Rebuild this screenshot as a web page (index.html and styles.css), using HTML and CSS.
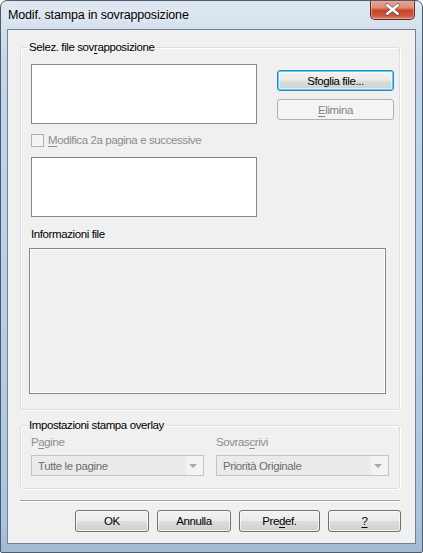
FILE: index.html
```html
<!DOCTYPE html>
<html>
<head>
<meta charset="utf-8">
<link rel="stylesheet" href="styles.css">
</head>
<body>
<div class="window">
  <div class="titlebar">
    <span class="title">Modif. stampa in sovrapposizione</span>
    <div class="close">
      <svg width="45" height="19" viewBox="0 0 45 19">
        <path d="M17 5 L28 14 M28 5 L17 14" stroke="#3b3b3b" stroke-width="4.2" stroke-linecap="round" fill="none" opacity="0.55"/>
        <path d="M17 5 L28 14 M28 5 L17 14" stroke="#ffffff" stroke-width="2.6" stroke-linecap="round" fill="none"/>
      </svg>
    </div>
  </div>
  <div class="client">
    <div class="group g1">
      <span class="legend">Selez. file sov<u>r</u>apposizione</span>
      <div class="row1">
        <div class="listbox"></div>
        <div class="btncol">
          <div class="btn default">Sfoglia file...</div>
          <div class="btn disabled"><u>E</u>limina</div>
        </div>
      </div>
      <div class="check"><span class="box"></span><span class="dis"><u>M</u>odifica 2a pagina e successive</span></div>
      <div class="listbox second"></div>
      <div class="label">Informazioni file</div>
      <div class="infobox"></div>
    </div>
    <div class="group g2">
      <span class="legend">Impostazioni stampa overlay</span>
      <div class="combos">
        <div class="field">
          <div class="dis flabel">P<u>a</u>gine</div>
          <div class="combo"><span class="ctext">Tutte le pagine</span><span class="carrow"></span></div>
        </div>
        <div class="field">
          <div class="dis flabel">Sovras<u>c</u>rivi</div>
          <div class="combo"><span class="ctext">Priorità Originale</span><span class="carrow"></span></div>
        </div>
      </div>
    </div>
    <div class="sep"></div>
    <div class="buttons">
      <div class="btn b-ok">OK</div>
      <div class="btn b-cancel">Annulla</div>
      <div class="btn b-def">Pre<u>d</u>ef.</div>
      <div class="btn b-help"><u>?</u></div>
    </div>
  </div>
</div>
</body>
</html>
```
FILE: styles.css
```css
* { box-sizing: border-box; }
html, body { margin: 0; padding: 0; background: #ffffff; }
body {
  font-family: "Liberation Sans", Arial, sans-serif;
  font-size: 11.5px;
  letter-spacing: -0.4px;
  color: #000;
}
u { text-decoration: underline; text-underline-offset: 2px; text-decoration-thickness: 1px; }

.window {
  width: 423px;
  height: 553px;
  border: 1px solid #4c5b6d;
  border-radius: 7px 7px 2px 2px;
  background: linear-gradient(180deg, #dfe8f1 0px, #d8e3ee 20px, #c3d6ea 60px, #b8cfe6 300px, #abc4dd 520px, #a0bad0 553px);
  display: flex;
  flex-direction: column;
  overflow: hidden;
}

.titlebar {
  height: 28px;
  display: flex;
  align-items: flex-start;
  padding-left: 7px;
}
.title {
  font-size: 12.5px;
  letter-spacing: -0.15px;
  line-height: 14px;
  margin-top: 7px;
  color: #000;
  text-shadow: 0 0 8px rgba(255,255,255,0.9);
}
.close {
  margin-left: auto;
  margin-right: 7px;
  margin-top: -1px;
  width: 45px;
  height: 20px;
  border: 1px solid #5b2a24;
  border-top: none;
  border-radius: 0 0 5px 5px;
  background: linear-gradient(180deg, #e9a899 0%, #dd8c79 40%, #c8452c 55%, #c9543a 80%, #d9826a 100%);
  box-shadow: inset 0 0 0 1px rgba(255,210,200,0.45);
  display: flex;
}
.close svg { display: block; }

.client {
  margin: 0 6px;
  height: 515px;
  border: 1px solid #6f8196;
  background: #f0f0f0;
  padding-top: 17px;
  padding-left: 12px;
}

.group {
  position: relative;
  width: 380px;
  border: 1px solid #d5dfe5;
  border-radius: 3px;
  box-shadow: inset 1px 1px 0 #ffffff, 1px 1px 0 #ffffff;
}
.legend {
  position: absolute;
  top: -8px;
  left: 6px;
  padding: 0 2px;
  background: #f0f0f0;
  line-height: 15px;
  white-space: nowrap;
}

.g1 {
  height: 363px;
  padding: 16px 0 0 10px;
}
.row1 { display: flex; }
.listbox {
  width: 226px;
  height: 60px;
  border: 1px solid #828790;
  background: #ffffff;
}
.btncol {
  margin-left: 20px;
  padding-top: 6px;
  display: flex;
  flex-direction: column;
  gap: 8px;
}
.btn {
  height: 21px;
  border: 1px solid #707070;
  border-radius: 3px;
  background: linear-gradient(180deg, #f2f2f2 0%, #ebebeb 48%, #dddddd 52%, #cfcfcf 100%);
  box-shadow: inset 0 0 0 1px rgba(255,255,255,0.7);
  display: flex;
  align-items: center;
  justify-content: center;
  line-height: 14px;
  white-space: nowrap;
}
.btncol .btn { width: 117px; }
.btn.default {
  border-color: #3c7fb1;
  box-shadow: inset 0 0 0 1px #48d7ff, inset 0 0 0 2px rgba(255,255,255,0.5);
  background: linear-gradient(180deg, #f2f2f2 0%, #ebebeb 48%, #dddddd 52%, #cfcfcf 100%);
}
.btn.disabled {
  border-color: #adb2b5;
  background: #f4f4f4;
  box-shadow: none;
  color: #838383;
}

.check {
  margin-top: 10px;
  height: 13px;
  display: flex;
  align-items: center;
}
.box {
  width: 13px;
  height: 13px;
  border: 1px solid #b1b1b1;
  background: linear-gradient(135deg, #f0f0f0, #f8f8f8);
  box-shadow: inset 0 0 0 1px #f4f4f4;
}
.check .dis { margin-left: 4px; line-height: 13px; }
.dis { color: #8d8d8d; }

.listbox.second { margin-top: 10px; }
.label {
  margin-top: 10px;
  line-height: 15px;
}
.infobox {
  margin-top: 6px;
  margin-left: -2px;
  width: 357px;
  height: 146px;
  border: 1px solid #828790;
  box-shadow: inset 0 0 0 1px #ffffff;
  background: #f0f0f0;
}

.g2 {
  margin-top: 15px;
  height: 64px;
  padding: 9px 0 0 10px;
}
.combos { display: flex; gap: 12px; }
.flabel {
  line-height: 15px;
}
.combo {
  margin-top: 5px;
  width: 173px;
  height: 21px;
  border: 1px solid #c3c3c3;
  background: linear-gradient(90deg, #ebebeb 0, #ebebeb 154px, #f3f3f3 154px);
  display: flex;
  align-items: center;
  padding-left: 6px;
}
.ctext {
  color: #6d6d6d;
  line-height: 14px;
  flex: 1;
}
.carrow {
  width: 0;
  height: 0;
  border-left: 4px solid transparent;
  border-right: 4px solid transparent;
  border-top: 4px solid #a8a8a8;
  margin-right: 6px;
  margin-top: 1px;
}

.sep {
  margin-top: 11px;
  width: 380px;
  height: 2px;
  border-top: 1px solid #a0a0a0;
  border-bottom: 1px solid #ffffff;
}
.buttons {
  margin-top: 8px;
  display: flex;
  padding-left: 55px;
}
.buttons .btn { height: 22px; }
.b-ok { width: 74px; }
.b-cancel { width: 74px; margin-left: 8px; }
.b-def { width: 81px; margin-left: 8px; }
.b-help { width: 73px; margin-left: 8px; }
```
